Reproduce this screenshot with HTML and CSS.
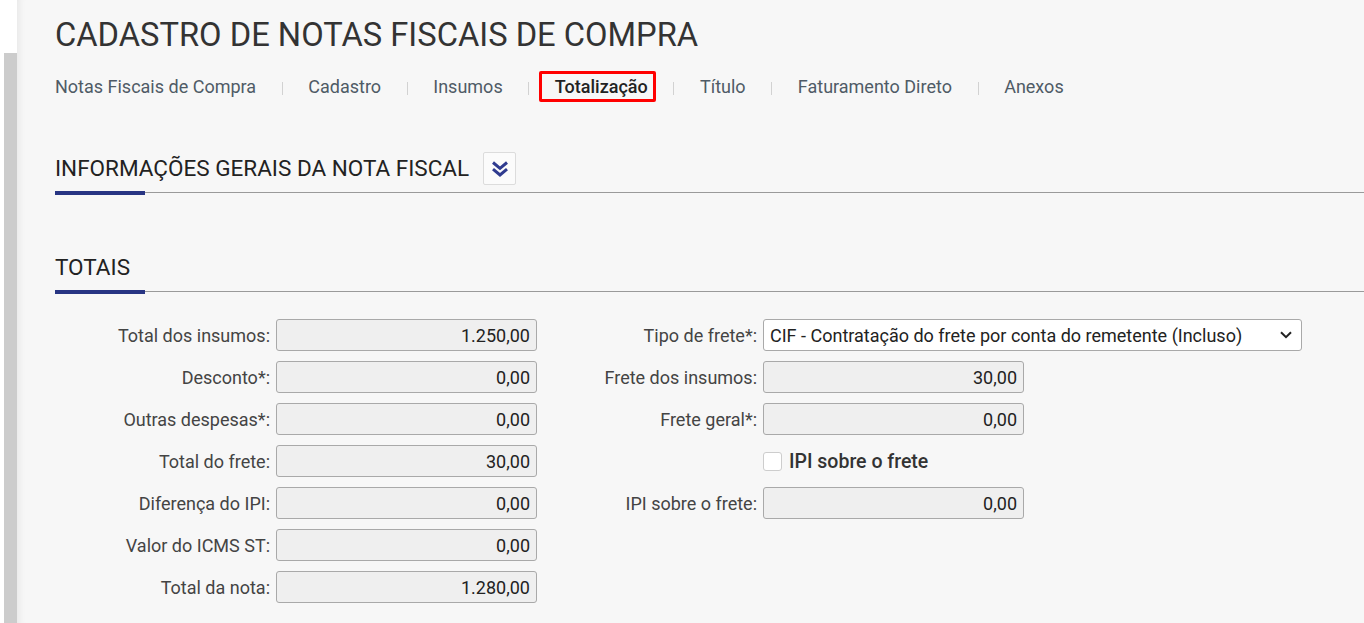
FILE: index.html
```html
<!DOCTYPE html>
<html lang="pt-BR">
<head>
<meta charset="utf-8">
<title>Cadastro de Notas Fiscais de Compra</title>
<link rel="stylesheet" href="styles.css">
</head>
<body>
<div class="app">
  <aside class="rail">
    <div class="rail-top"></div>
    <div class="rail-bar"></div>
  </aside>
  <main class="content">
    <h1 class="page-title">CADASTRO DE NOTAS FISCAIS DE COMPRA</h1>
    <nav class="tabs">
      <span class="tab">Notas Fiscais de Compra</span>
      <span class="tab-sep"></span>
      <span class="tab">Cadastro</span>
      <span class="tab-sep"></span>
      <span class="tab">Insumos</span>
      <span class="tab-sep"></span>
      <span class="tab active">Totalização</span>
      <span class="tab-sep"></span>
      <span class="tab">Título</span>
      <span class="tab-sep"></span>
      <span class="tab">Faturamento Direto</span>
      <span class="tab-sep"></span>
      <span class="tab">Anexos</span>
    </nav>

    <section class="block block-info">
      <div class="block-head">
        <h2 class="block-title">INFORMAÇÕES GERAIS DA NOTA FISCAL</h2>
        <span class="toggle">
          <svg width="18" height="18" viewBox="0 0 18 18" aria-hidden="true">
            <path d="M2 2.5 L9 8.3 L16 2.5" fill="none" stroke="#2f3b8f" stroke-width="3" stroke-linejoin="miter"/>
            <path d="M2 9.2 L9 15 L16 9.2" fill="none" stroke="#2f3b8f" stroke-width="3" stroke-linejoin="miter"/>
          </svg>
        </span>
      </div>
    </section>

    <section class="block block-totais">
      <div class="block-head">
        <h2 class="block-title">TOTAIS</h2>
      </div>
      <div class="form">
        <div class="form-col col-left">
          <label class="f-label">Total dos insumos:</label>
          <input class="f-input" type="text" value="1.250,00" readonly>
          <label class="f-label">Desconto*:</label>
          <input class="f-input" type="text" value="0,00" readonly>
          <label class="f-label">Outras despesas*:</label>
          <input class="f-input" type="text" value="0,00" readonly>
          <label class="f-label">Total do frete:</label>
          <input class="f-input" type="text" value="30,00" readonly>
          <label class="f-label">Diferença do IPI:</label>
          <input class="f-input" type="text" value="0,00" readonly>
          <label class="f-label">Valor do ICMS ST:</label>
          <input class="f-input" type="text" value="0,00" readonly>
          <label class="f-label">Total da nota:</label>
          <input class="f-input" type="text" value="1.280,00" readonly>
        </div>
        <div class="form-col col-right">
          <label class="f-label">Tipo de frete*:</label>
          <div class="f-select">
            <span>CIF - Contratação do frete por conta do remetente (Incluso)</span>
            <svg width="12" height="8" viewBox="0 0 12 8" aria-hidden="true">
              <path d="M1 1.2 L6 6.2 L11 1.2" fill="none" stroke="#222" stroke-width="2"/>
            </svg>
          </div>
          <label class="f-label">Frete dos insumos:</label>
          <input class="f-input narrow" type="text" value="30,00" readonly>
          <label class="f-label">Frete geral*:</label>
          <input class="f-input narrow" type="text" value="0,00" readonly>
          <span class="f-label"></span>
          <label class="f-check"><span class="check-box"></span><span class="check-text">IPI sobre o frete</span></label>
          <label class="f-label">IPI sobre o frete:</label>
          <input class="f-input narrow" type="text" value="0,00" readonly>
        </div>
      </div>
    </section>
  </main>
</div>
</body>
</html>
```
FILE: styles.css
```css
html, body {
  margin: 0;
  height: 100%;
}

body {
  font-family: Roboto, "Liberation Sans", Arial, sans-serif;
  background: #f7f7f7;
  color: #222;
  overflow: hidden;
}

.app {
  display: flex;
  min-height: 100vh;
}

.rail {
  width: 17px;
  flex: none;
  background: #fff;
  display: flex;
  flex-direction: column;
}

.rail-top {
  height: 53px;
}

.rail-bar {
  flex: 1;
  margin-left: 4px;
  background: #cccccc;
}

.content {
  flex: 1;
  padding: 17px 0 0 38px;
  box-shadow: inset 8px 0 7px -6px rgba(0, 0, 0, 0.07);
}

.page-title {
  margin: 0;
  font-size: 32.7px;
  font-weight: 400;
  line-height: 36px;
  color: #333;
}

.tabs {
  display: flex;
  align-items: center;
  margin-top: 22px;
  font-size: 18px;
  line-height: 24px;
  color: #4f5b66;
}

.tab-sep {
  width: 1px;
  height: 13px;
  background: #d2d2d2;
  margin: 2px 25.6px 0;
}

.tab.active {
  position: relative;
  color: #222;
  font-weight: 500;
}

.tab.active::after {
  content: "";
  position: absolute;
  left: -16px;
  right: -8px;
  top: -4px;
  bottom: -3px;
  border: 3px solid #ff0000;
  border-radius: 2px;
}

.block-info {
  margin-top: 53px;
}

.block-totais {
  margin-top: 58px;
}

.block-head {
  position: relative;
  display: flex;
  align-items: center;
  gap: 14px;
  height: 33px;
  padding-bottom: 7px;
  border-bottom: 1px solid #9a9a9a;
}

.block-head::after {
  content: "";
  position: absolute;
  left: 0;
  bottom: -3px;
  width: 90px;
  height: 4px;
  background: #283583;
}

.block-title {
  margin: 0;
  font-size: 22.5px;
  font-weight: 400;
  line-height: 33px;
  color: #222;
}

.toggle {
  box-sizing: border-box;
  width: 33px;
  height: 33px;
  display: flex;
  align-items: center;
  justify-content: center;
  background: #fbfbfb;
  border: 1px solid #dcdcdc;
  border-radius: 2px;
}

.form {
  display: flex;
  margin-top: 22px;
}

.form-col {
  display: grid;
  grid-auto-rows: 42px;
  align-items: center;
}

.col-left {
  grid-template-columns: 221px 261px;
}

.col-right {
  grid-template-columns: 226px 539px;
}

.f-label {
  text-align: right;
  padding-right: 6px;
  font-size: 18px;
  color: #444;
  white-space: nowrap;
}

.f-input {
  box-sizing: border-box;
  width: 261px;
  height: 32px;
  margin: 0;
  padding: 0 6px;
  border: 1px solid #a9a9a9;
  border-radius: 3px;
  background: #efefef;
  font-family: Roboto, "Liberation Sans", Arial, sans-serif;
  font-size: 18px;
  color: #222;
  text-align: right;
  outline: none;
}

.f-select {
  box-sizing: border-box;
  height: 32px;
  width: 539px;
  display: flex;
  align-items: center;
  justify-content: space-between;
  padding: 0 9px 0 6px;
  border: 1px solid #a9a9a9;
  border-radius: 3px;
  background: #fff;
  font-size: 18px;
  color: #222;
}

.f-check {
  display: flex;
  align-items: center;
  gap: 7px;
}

.check-box {
  box-sizing: border-box;
  width: 19px;
  height: 19px;
  border: 1px solid #cdcdcd;
  border-radius: 3px;
  background: #fff;
}

.check-text {
  font-size: 19.5px;
  font-weight: 500;
  color: #333;
}
```
